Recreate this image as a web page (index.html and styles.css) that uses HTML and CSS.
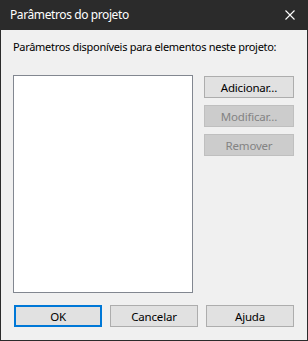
FILE: index.html
```html
<!DOCTYPE html>
<html lang="pt">
<head>
    <meta charset="UTF-8">
    <meta name="viewport" content="width=device-width, initial-scale=1.0">
    <title>Parâmetros do projeto</title>
    <link rel="stylesheet" href="styles.css">
</head>
<body>

<div class="window">
    <div class="titlebar">
        <span class="title">Parâmetros do projeto</span>
        <svg class="close" width="10" height="10" viewBox="0 0 10 10">
            <path d="M0.5 0.5 L9.5 9.5 M9.5 0.5 L0.5 9.5" stroke="#ffffff" stroke-width="1.1" fill="none"/>
        </svg>
    </div>

    <div class="content">
        <label class="caption" for="paramList">Parâmetros disponíveis para elementos neste projeto:</label>

        <div class="main">
            <div class="listbox" id="paramList"></div>
            <div class="side">
                <button type="button" class="btn">Adicionar…</button>
                <button type="button" class="btn" disabled>Modificar…</button>
                <button type="button" class="btn" disabled>Remover</button>
            </div>
        </div>

        <div class="footer">
            <button type="button" class="btn default">OK</button>
            <button type="button" class="btn">Cancelar</button>
            <button type="button" class="btn">Ajuda</button>
        </div>
    </div>
</div>

</body>
</html>
```

FILE: styles.css
```css
body {
    margin: 0;
    background-color: #ffffff;
    font-family: "Noto Sans", "Open Sans", sans-serif;
    font-size: 12px;
    color: #000000;
}

.window {
    width: 308px;
    height: 341px;
    box-sizing: border-box;
    border: 1px solid #2b2b2b;
    border-top: none;
    display: flex;
    flex-direction: column;
    background-color: #f0f0f0;
}

.titlebar {
    height: 30px;
    margin: 0 -1px;
    background-color: #2b2b2b;
    color: #ffffff;
    display: flex;
    align-items: center;
    justify-content: space-between;
    padding: 0 13px 0 10px;
    flex-shrink: 0;
}

.title {
    font-size: 12px;
    letter-spacing: -0.4px;
    padding-bottom: 1px;
}

.content {
    flex: 1;
    display: flex;
    flex-direction: column;
    padding: 9px 13px 0 11px;
}

.caption {
    display: block;
    font-size: 11px;
    line-height: 16px;
    height: 16px;
    white-space: nowrap;
    letter-spacing: -0.3px;
    padding-left: 1px;
}

.main {
    display: flex;
    margin-top: 20px;
    margin-left: 1px;
    gap: 11px;
}

.listbox {
    width: 180px;
    height: 218px;
    box-sizing: border-box;
    border: 1px solid #828790;
    background-color: #ffffff;
}

.side {
    display: flex;
    flex-direction: column;
    gap: 7px;
    padding-top: 1px;
}

.btn {
    width: 90px;
    height: 22px;
    box-sizing: border-box;
    border: 1px solid #adadad;
    background-color: #e1e1e1;
    font-family: inherit;
    font-size: 11.5px;
    letter-spacing: -0.2px;
    color: #000000;
    padding: 0;
    margin: 0;
}

.btn:disabled {
    background-color: #cccccc;
    border-color: #bfbfbf;
    color: #838383;
}

.footer {
    display: flex;
    gap: 8px;
    margin-top: 12px;
    padding-left: 2px;
}

.footer .btn {
    width: 88px;
}

.btn.default {
    border: 2px solid #0078d7;
}
```
